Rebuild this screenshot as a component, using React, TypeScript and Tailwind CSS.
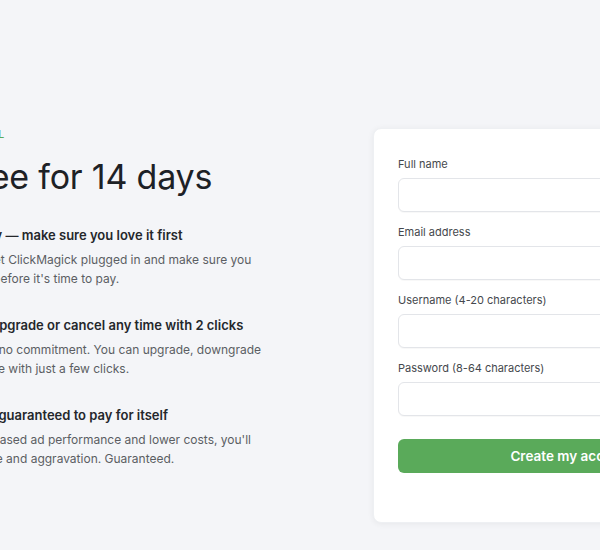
import React from "react";

const features = [
  {
    title: "Try it out totally — make sure you love it first",
    lines: ["Go ahead and get ClickMagick plugged in and make sure you", "do love using it before it's time to pay."],
  },
  {
    title: "Switch plans, upgrade or cancel any time with 2 clicks",
    lines: ["No contract and no commitment. You can upgrade, downgrade", "or cancel anytime with just a few clicks."],
  },
  {
    title: "ClickMagick is guaranteed to pay for itself",
    lines: ["Because of increased ad performance and lower costs, you'll", "save money, time and aggravation. Guaranteed."],
  },
];

const fields = ["Full name", "Email address", "Username (4-20 characters)", "Password (8-64 characters)"];

export default function App() {
  return (
    <div
      className="w-[600px] h-[550px] overflow-hidden bg-[#f4f5f8]"
      style={{ fontFamily: "Inter, 'Noto Sans', sans-serif" }}
    >
      <div className="flex w-[880px] -ml-[96px] pt-[128px]">
        {/* Left: pitch */}
        <div className="w-[411px] shrink-0">
          <div className="text-[10.5px] font-medium tracking-[0.01em] text-[#5aaa5a] leading-[14px]">
            14-DAY FREE TRIAL
          </div>
          <h1 className="mt-[14px] text-[34px] leading-[42px] font-normal text-[#1d2126] tracking-[-0.2px]">
            Try free for 14 days
          </h1>
          <div className="mt-[28px] flex flex-col gap-[28px]">
            {features.map((f) => (
              <div key={f.title}>
                <h3 className="text-[13px] leading-[18px] font-semibold text-[#24272b]">{f.title}</h3>
                <p className="mt-[7px] text-[12px] leading-[18.5px] text-[#5b5e63]">
                  {f.lines[0]}
                  <br />
                  {f.lines[1]}
                </p>
              </div>
            ))}
          </div>
        </div>

        {/* Right: signup card */}
        <div className="ml-[58px] w-[398px] shrink-0 rounded-lg bg-white px-6 pt-[27px] pb-[49px] shadow-[0_1px_6px_rgba(0,0,0,0.06)] border border-[#eef0f3]">
          <div className="flex flex-col gap-[12px]">
            {fields.map((label) => (
              <div key={label}>
                <label className="block text-[11px] leading-[16px] text-[#45484d]">{label}</label>
                <input
                  className="mt-[6px] block w-full h-[34px] rounded-md border border-[#e3e5e9] bg-white shadow-[0_1px_1px_rgba(0,0,0,0.03)]"
                  type={label.startsWith("Password") ? "password" : "text"}
                />
              </div>
            ))}
          </div>
          <button className="mt-[23px] w-full h-[34px] rounded-md bg-[#5aaa5a] text-white text-[13.5px] font-semibold">
            Create my account
          </button>
        </div>
      </div>
    </div>
  );
}
